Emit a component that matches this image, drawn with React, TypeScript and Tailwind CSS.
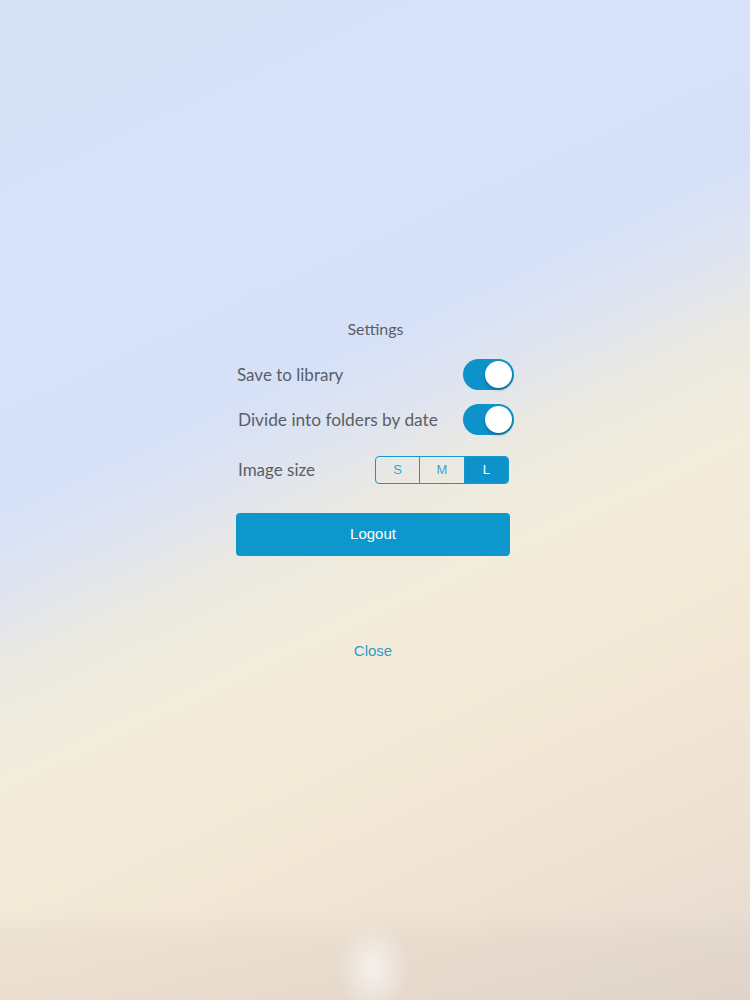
import React from 'react';

const labelFont = "font-['Lato','Open_Sans',sans-serif]";

function Toggle({ on = true }: { on?: boolean }) {
  return (
    <div
      className={`relative h-[31px] w-[51px] rounded-full -mr-[4px] ${
        on ? 'bg-[#0d93c9]' : 'bg-[#e5e5e5]'
      }`}
    >
      <div
        className={`absolute top-[2px] h-[27px] w-[27px] rounded-full bg-white shadow-[0_2px_3px_rgba(0,0,0,0.25)] ${
          on ? 'right-[2px]' : 'left-[2px]'
        }`}
      />
    </div>
  );
}

const sizes = ['S', 'M', 'L'];

export default function App() {
  const [size, setSize] = React.useState('L');

  return (
    <div className="relative h-[1000px] w-full overflow-hidden bg-[radial-gradient(ellipse_36px_48px_at_373px_968px,rgba(248,244,242,0.85),rgba(248,244,242,0)),linear-gradient(to_bottom,rgba(210,195,185,0)_91%,rgba(210,195,185,0.2)_94%,rgba(210,195,185,0.25)_100%),linear-gradient(155deg,#d6e1f5_0%,#d7e1fa_25%,#d6e1f8_38%,#dfe4f0_44%,#ebe9e1_50%,#f2ecdb_58%,#f3e8d6_72%,#eee2d3_84%,#e5dad0_100%)]">
      <div className="ml-[236px] flex w-[274px] flex-col pt-[318px]">
        <div className={`${labelFont} h-[22px] pl-[5px] text-center text-[16px] leading-[22px] text-[#5a5e66]`}>
          Settings
        </div>

        <div className="mt-[19px] flex h-[31px] items-center justify-between">
          <span className={`${labelFont} pl-[1px] text-[17px] text-[#5a5e66]`}>Save to library</span>
          <Toggle />
        </div>

        <div className="mt-[14px] flex h-[31px] items-center justify-between">
          <span className={`${labelFont} pl-[2px] text-[17.3px] text-[#5a5e66]`}>Divide into folders by date</span>
          <Toggle />
        </div>

        <div className="mt-[21px] flex h-[28px] items-center justify-between">
          <span className={`${labelFont} pl-[2px] text-[17px] text-[#5a5e66]`}>Image size</span>
          <div className="mr-[1px] flex h-[28px] w-[134px] overflow-hidden rounded-[4px] border border-[#1997cc]">
            {sizes.map((s, i) => (
              <button
                key={s}
                onClick={() => setSize(s)}
                className={`flex flex-1 items-center justify-center font-['Liberation_Sans',Arial,sans-serif] text-[13px] ${
                  i > 0 ? 'border-l border-[#1997cc]' : ''
                } ${size === s ? 'bg-[#0d93c9] text-white' : 'bg-transparent text-[#3aa2d2]'}`}
              >
                {s}
              </button>
            ))}
          </div>
        </div>

        <button className="mt-[29px] h-[43px] w-full rounded-[4px] bg-[#0d97cc] font-['Liberation_Sans',Arial,sans-serif] text-[15px] text-white">
          Logout
        </button>

        <button className="mt-[85px] h-[20px] self-center font-['Liberation_Sans',Arial,sans-serif] text-[15px] leading-[20px] text-[#2a9dc9]">
          Close
        </button>
      </div>
    </div>
  );
}
